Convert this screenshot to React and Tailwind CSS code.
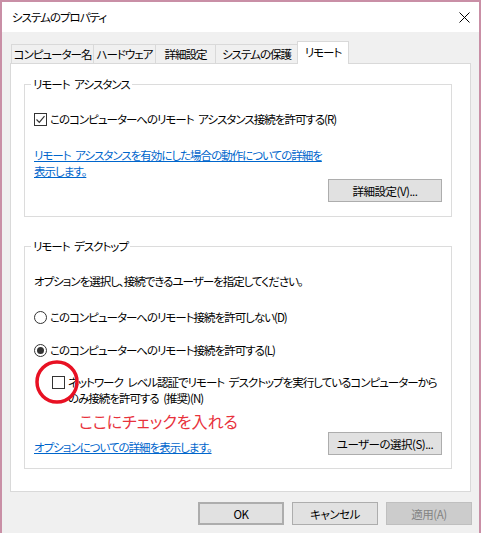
import React from "react";

const Checkbox = ({ checked }) => (
  <span className="w-[13px] h-[13px] shrink-0 border border-[#333333] bg-white flex items-center justify-center">
    {checked && (
      <svg width="11" height="11" viewBox="0 0 11 11">
        <path d="M1.5 5.5 L4.3 8.3 L9.5 2.2" fill="none" stroke="#333333" strokeWidth="1.2" />
      </svg>
    )}
  </span>
);

const Radio = ({ checked }) => (
  <span className="w-[13px] h-[13px] shrink-0 rounded-full border border-[#333333] bg-white flex items-center justify-center">
    {checked && <span className="w-[7px] h-[7px] rounded-full bg-[#333333]" />}
  </span>
);

const Button = ({ children, className = "" }) => (
  <button
    className={
      "h-[23px] flex items-center justify-center border bg-[#e1e1e1] border-[#adadad] text-black whitespace-nowrap tracking-[-0.5px] " +
      className
    }
  >
    {children}
  </button>
);

const tabs = [
  { label: "コンピューター名", w: "w-[82px]" },
  { label: "ハードウェア", w: "w-[62px]" },
  { label: "詳細設定", w: "w-[60px]" },
  { label: "システムの保護", w: "w-[82px]" },
];

const App = () => {
  return (
    <div className="w-[481px] h-[533px] bg-[#f0f0f0] flex flex-col border-x-2 border-t-2 border-[#c98fa6] text-black text-[11.5px] tracking-[-1px] [word-spacing:3px] leading-[16px] whitespace-nowrap font-['Noto_Sans_CJK_JP','Noto_Sans',sans-serif] [font-feature-settings:'palt']">
      {/* title bar */}
      <div className="h-[30px] shrink-0 bg-white flex items-center justify-between pl-[10px] pr-[9px]">
        <span>システムのプロパティ</span>
        <svg width="11" height="11" viewBox="0 0 11 11">
          <path d="M0.5 0.5 L10.5 10.5 M10.5 0.5 L0.5 10.5" stroke="#000" strokeWidth="1" />
        </svg>
      </div>

      {/* tabs */}
      <div className="flex items-end ml-[9px] mt-[9px] h-[23px] -mb-px relative z-10">
        {tabs.map((t) => (
          <div
            key={t.label}
            className={
              "h-[19px] mb-px flex items-center justify-center border-l border-t border-[#d9d9d9] bg-[#f0f0f0] " +
              t.w
            }
          >
            {t.label}
          </div>
        ))}
        <div className="h-[23px] w-[52px] flex items-center justify-center border-x border-t border-[#d9d9d9] bg-white pb-[3px]">
          リモート
        </div>
      </div>

      {/* panel */}
      <div className="ml-[8px] w-[461px] h-[429px] shrink-0 bg-white border border-[#d9d9d9] pl-[13px]">
        <fieldset className="mt-[12px] w-[428px] border border-[#dcdcdc] px-[9px] pb-[14px]">
          <legend className="-ml-[3px] px-[2px]">リモート アシスタンス</legend>
          <div className="mt-[19px] flex items-center gap-[3px]">
            <Checkbox checked />
            <span>このコンピューターへのリモート アシスタンス接続を許可する(R)</span>
          </div>
          <p className="mt-[20px] text-[#0066cc] underline">
            リモート アシスタンスを有効にした場合の動作についての詳細を
            <br />
            表示します。
          </p>
          <div className="flex justify-end">
            <Button className="w-[114px]">詳細設定(V)...</Button>
          </div>
        </fieldset>

        <fieldset className="mt-[21px] w-[428px] border border-[#dcdcdc] px-[9px] pb-[13px]">
          <legend className="-ml-[3px] px-[2px]">リモート デスクトップ</legend>
          <p className="mt-[19px]">オプションを選択し、接続できるユーザーを指定してください。</p>
          <div className="mt-[20px] flex items-center gap-[3px]">
            <Radio />
            <span>このコンピューターへのリモート接続を許可しない(D)</span>
          </div>
          <div className="mt-[17px] flex items-center gap-[3px]">
            <Radio checked />
            <span>このコンピューターへのリモート接続を許可する(L)</span>
          </div>
          <div className="mt-[16px] pl-[18px] flex items-start gap-[3px] relative">
            <span className="mt-[2px]">
              <Checkbox />
            </span>
            <span>
              ネットワーク レベル認証でリモート デスクトップを実行しているコンピューターから
              <br />
              のみ接続を許可する (推奨)(N)
            </span>
            <svg className="absolute left-[1px] -top-[14px]" width="44" height="44" viewBox="0 0 44 44">
              <ellipse cx="22" cy="22" rx="20" ry="20" fill="none" stroke="#e81123" strokeWidth="3.5" />
            </svg>
          </div>
          <p className="mt-[5px] pl-[45px] text-[16px] leading-[20px] tracking-normal text-[#e8323c]">ここにチェックを入れる</p>
          <div className="mt-px flex items-end justify-between">
            <span className="text-[#0066cc] underline">オプションについての詳細を表示します。</span>
            <Button className="w-[114px]">ユーザーの選択(S)...</Button>
          </div>
        </fieldset>
      </div>

      {/* footer */}
      <div className="mt-[10px] flex justify-end gap-[8px] pr-[7px]">
        <Button className="w-[86px] border-2 border-[#3d7bc4]">OK</Button>
        <Button className="w-[86px]">キャンセル</Button>
        <button className="w-[86px] h-[23px] flex items-center justify-center border border-[#bfbfbf] bg-[#cccccc] text-[#838383] tracking-[-0.5px]">
          適用(A)
        </button>
      </div>
    </div>
  );
};

export default App;
